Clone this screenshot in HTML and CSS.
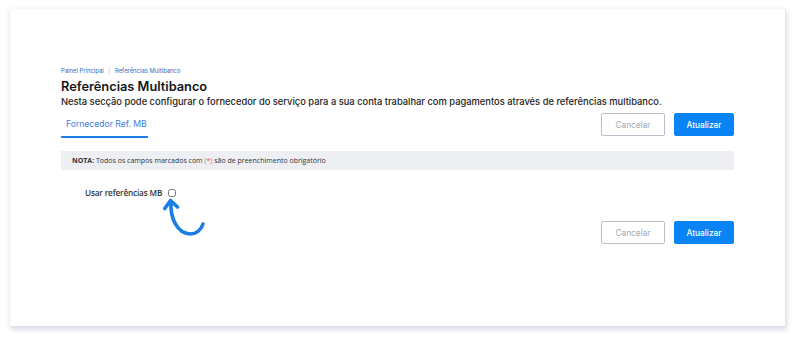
FILE: index.html
```html
<!DOCTYPE html>
<html lang="pt">

<head>
    <meta charset="UTF-8">
    <meta name="viewport" content="width=device-width, initial-scale=1.0">
    <title>Referências Multibanco</title>
    <link rel="stylesheet" href="styles.css">
</head>

<body>
    <div class="card">
        <div class="breadcrumb">
            <a href="#">Painel Principal</a>
            <span class="sep">|</span>
            <a href="#">Referências Multibanco</a>
        </div>
        <h1>Referências Multibanco</h1>
        <p class="intro">Nesta secção pode configurar o fornecedor do serviço para a sua conta trabalhar com pagamentos através de referências multibanco.</p>

        <div class="toolbar">
            <div class="tab active">Fornecedor Ref. MB</div>
            <div class="actions">
                <button class="btn btn-cancel">Cancelar</button>
                <button class="btn btn-primary">Atualizar</button>
            </div>
        </div>

        <div class="note"><b>NOTA:</b> Todos os campos marcados com <span class="req">(*)</span> são de preenchimento obrigatório</div>

        <div class="field">
            <label for="useMb">Usar referências MB</label>
            <span class="check-wrap">
                <input type="checkbox" id="useMb">
                <!-- seta de ajuda -->
                <svg class="hint-arrow" width="50" height="44" viewBox="0 0 50 44">
                    <path d="M8 4 C7 20 14 35 27 36 C33 36 38 32 40 26" fill="none" stroke="#1a7ee6" stroke-width="3.6" stroke-linecap="round"/>
                    <path d="M1.8 10.5 L7.5 2.5 L14.5 9" fill="none" stroke="#1a7ee6" stroke-width="3.6" stroke-linecap="round" stroke-linejoin="round"/>
                </svg>
            </span>
        </div>

        <div class="actions bottom">
            <button class="btn btn-cancel">Cancelar</button>
            <button class="btn btn-primary">Atualizar</button>
        </div>
    </div>
</body>

</html>
```

FILE: styles.css
```css
body {
    margin: 0;
    padding: 9px 14px 14px 10px;
    background-color: #ffffff;
    font-family: "Inter", "Noto Sans", sans-serif;
    color: #1d1d24;
}

.card {
    height: 318px;
    box-sizing: border-box;
    background: #ffffff;
    border-right: 1px solid #e4e6ee;
    border-bottom: 1px solid #dfe1ea;
    box-shadow: 1px 3px 5px rgba(60, 70, 120, 0.18), -1px -1px 5px rgba(0, 0, 0, 0.04);
    padding: 57px 51px 0 51px;
}

.breadcrumb {
    font-size: 5.9px;
    color: #3a67b8;
    height: 9px;
    line-height: 9px;
}

.breadcrumb a {
    color: #3a67b8;
    text-decoration: none;
}

.breadcrumb .sep {
    color: #b8bcc8;
    margin: 0 3px;
}

h1 {
    margin: 4px 0 0 0;
    font-size: 12.8px;
    font-weight: 600;
    line-height: 16px;
    color: #16161c;
}

.intro {
    margin: 0;
    font-size: 9.35px;
    font-weight: 500;
    line-height: 13px;
    color: #1d1d24;
}

.toolbar {
    display: flex;
    justify-content: space-between;
    align-items: flex-start;
    margin-top: 5px;
}

.tab {
    margin-top: 1px;
    padding: 5px 0 0 5px;
    height: 17px;
    width: 82px;
    white-space: nowrap;
    font-size: 8.6px;
    color: #3b7fe0;
    border-bottom: 2px solid #1a7ee6;
    border-radius: 1px;
}

.actions {
    display: flex;
    gap: 9px;
}

.btn {
    height: 23px;
    font-family: "Inter", "Noto Sans", sans-serif;
    font-size: 8.3px;
    border-radius: 2px;
    cursor: pointer;
}

.btn-cancel {
    width: 64px;
    background: #ffffff;
    border: 1px solid #b9c0cc;
    color: #a3a8b3;
}

.btn-primary {
    width: 60px;
    background: #0a84f5;
    border: 1px solid #0a84f5;
    color: #ffffff;
    font-weight: 500;
}

.note {
    margin-top: 13px;
    height: 19px;
    line-height: 19px;
    background: #eeeff2;
    padding-left: 11px;
    font-family: "Open Sans", sans-serif;
    font-size: 7px;
    color: #333338;
}

.note b {
    font-weight: 700;
}

.req {
    color: #e25b5b;
}

.field {
    display: flex;
    align-items: center;
    margin: 17px 0 0 24px;
}

.field label {
    font-family: "Open Sans", sans-serif;
    font-size: 8.2px;
    font-weight: 600;
    letter-spacing: -0.15px;
    color: #333338;
}

.check-wrap {
    position: relative;
    margin-left: 6px;
    display: inline-flex;
}

.check-wrap input {
    margin: 0;
    width: 8px;
    height: 8px;
}

.hint-arrow {
    position: absolute;
    left: -5px;
    top: 9px;
}

.actions.bottom {
    justify-content: flex-end;
    margin-top: 23px;
}
```
